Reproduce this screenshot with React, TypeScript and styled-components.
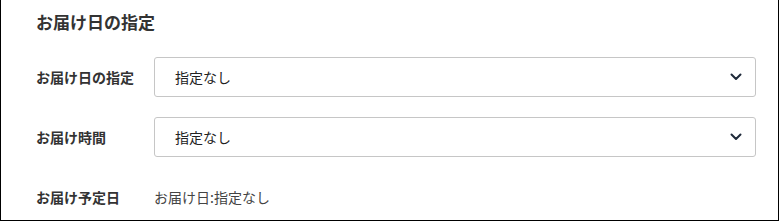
import React from "react";
import styled, { createGlobalStyle } from "styled-components";

const GlobalStyle = createGlobalStyle`
  html, body {
    margin: 0;
    padding: 0;
    background: #fff;
  }
  body {
    font-family: "Noto Sans CJK JP", "Noto Sans", sans-serif;
    color: #333;
  }
`;

const Panel = styled.section`
  box-sizing: border-box;
  width: 779px;
  height: 221px;
  border: 1px solid #000;
  border-top: none;
  padding: 10px 22px 0 35px;
`;

const Heading = styled.h2`
  margin: 0;
  font-size: 17px;
  line-height: 24px;
  font-weight: 700;
  color: #333;
`;

const Form = styled.div`
  display: grid;
  grid-template-columns: 118px 1fr;
  grid-auto-rows: 40px;
  row-gap: 20px;
  align-items: center;
  margin-top: 23px;
`;

const Label = styled.div`
  font-size: 14px;
  font-weight: 700;
  color: #333;
`;

const SelectBox = styled.div`
  box-sizing: border-box;
  height: 40px;
  display: flex;
  align-items: center;
  justify-content: space-between;
  border: 1px solid #c6c6c6;
  border-radius: 3px;
  padding: 0 13px 0 20px;
  font-size: 14px;
  color: #222;
  background: #fff;
  cursor: pointer;
`;

const Value = styled.div<{ $muted?: boolean }>`
  font-size: 14px;
  color: ${({ $muted }) => ($muted ? "#444" : "#222")};
`;

const Chevron = () => (
  <svg width="12" height="8" viewBox="0 0 12 8" fill="none">
    <path d="M1.5 1.5 L6 6 L10.5 1.5" stroke="#1f2a3a" strokeWidth="2" strokeLinecap="round" strokeLinejoin="round" />
  </svg>
);

const Select = ({ value }: { value: string }) => (
  <SelectBox role="listbox">
    <span>{value}</span>
    <Chevron />
  </SelectBox>
);

export default function App() {
  return (
    <>
      <GlobalStyle />
      <Panel>
        <Heading>お届け日の指定</Heading>
        <Form>
          <Label>お届け日の指定</Label>
          <Select value="指定なし" />
          <Label>お届け時間</Label>
          <Select value="指定なし" />
          <Label>お届け予定日</Label>
          <Value $muted>お届け日:指定なし</Value>
        </Form>
      </Panel>
    </>
  );
}
